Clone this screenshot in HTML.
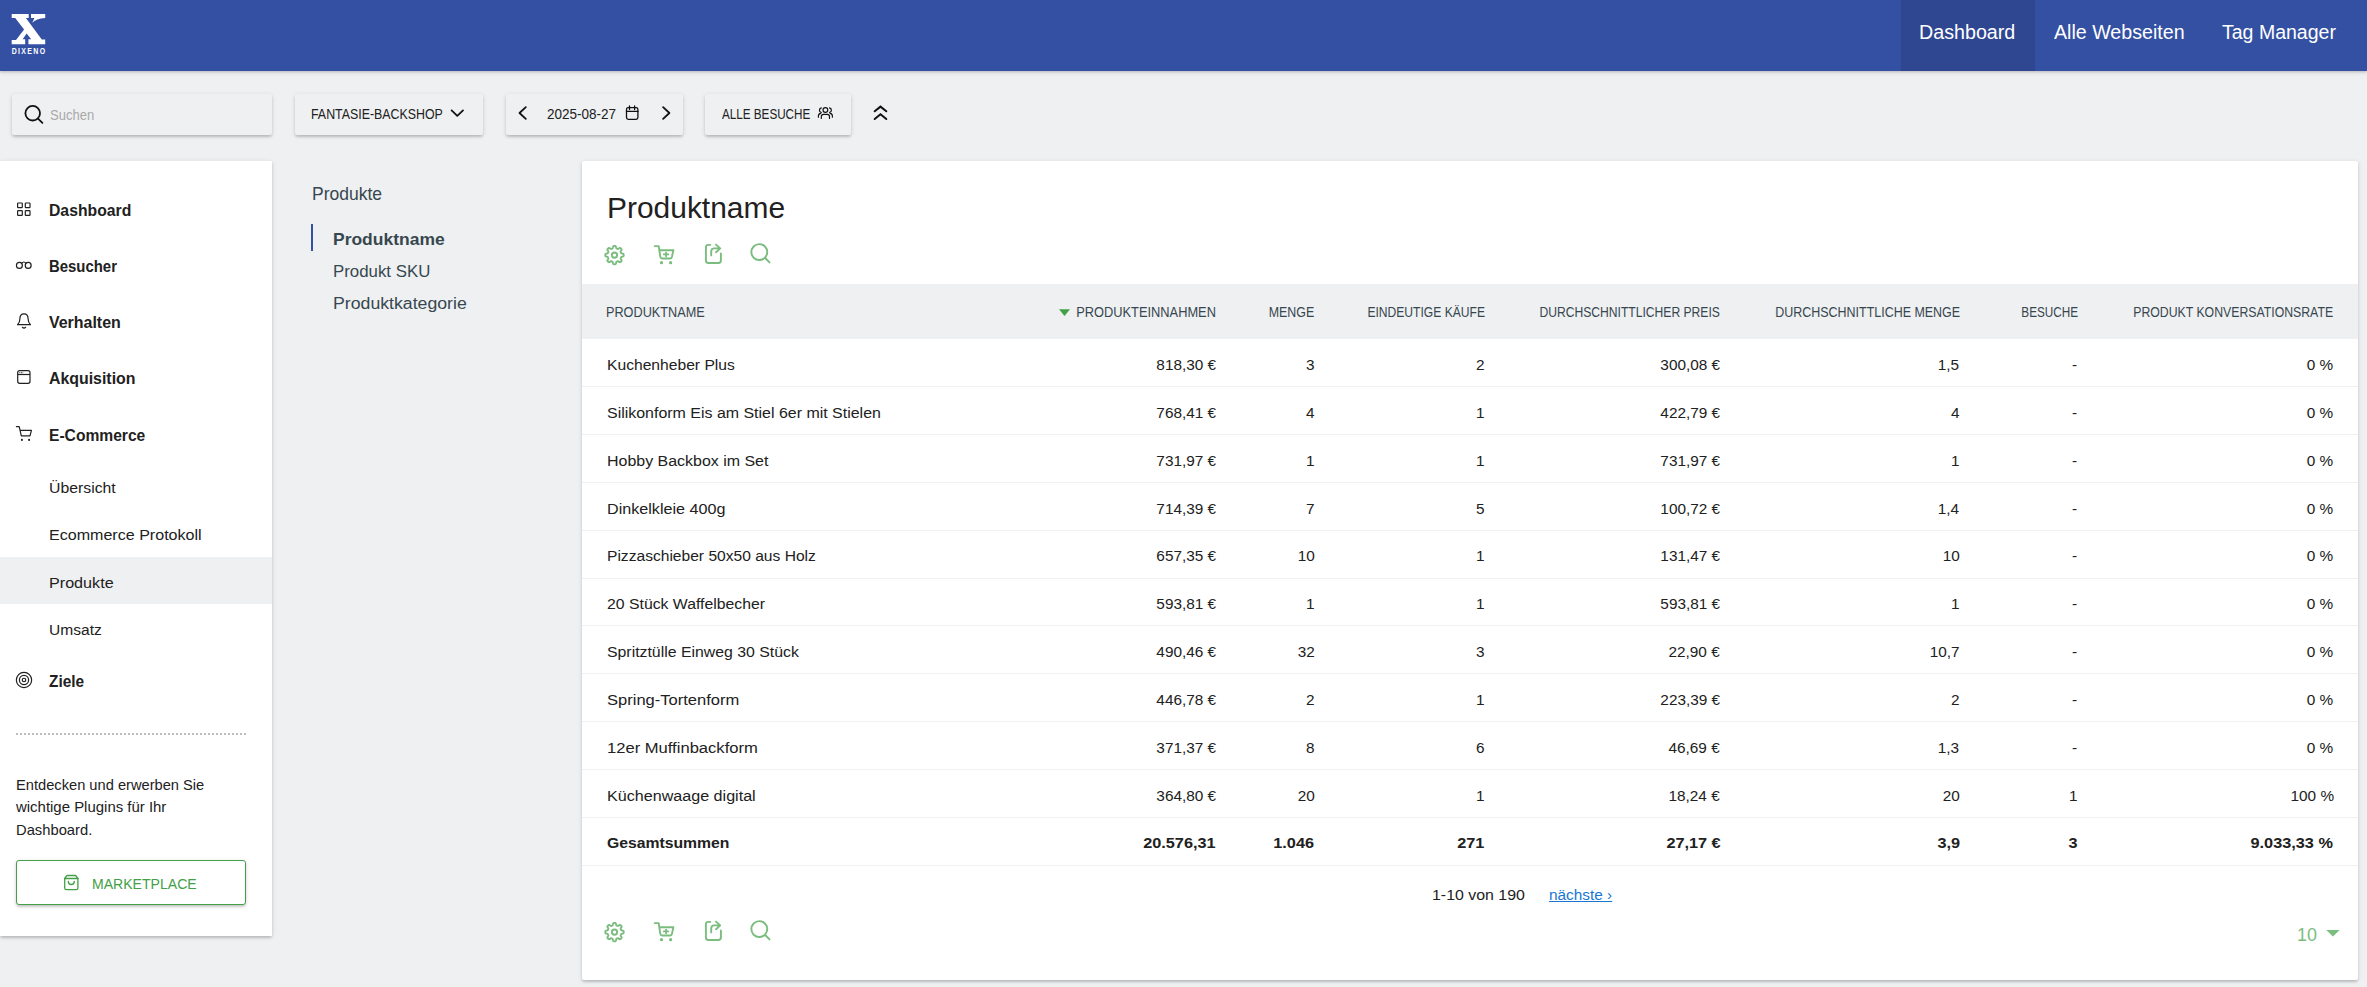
<!DOCTYPE html>
<html lang="de">
<head>
<meta charset="utf-8">
<title>Produkte - Dixeno Analytics</title>
<style>
*{box-sizing:border-box;margin:0;padding:0}
html,body{width:2367px;height:987px;overflow:hidden}
body{background:#eff0f2;font-family:"Liberation Sans",sans-serif;color:#212121;position:relative}
header,nav,aside,main,section,footer{display:contents}
.a{position:absolute}
.t{position:absolute;white-space:nowrap;display:block}
svg{position:absolute;overflow:visible}
.z1{box-shadow:0 2px 2.5px 0 rgba(0,0,0,.12),0 1px 5.5px 0 rgba(0,0,0,.11),0 3px 3px -2px rgba(0,0,0,.07)}
#hdr{left:0;top:0;width:2367px;height:71px;background:#3450a3;box-shadow:0 1px 2px rgba(0,0,0,.13),0 2px 4px rgba(0,0,0,.1)}
#act{left:1901px;top:0;width:134px;height:71px;background:#2f4691}
.box{top:94px;height:41px;background:#eff0f2;border-radius:2px}
#side{left:0;top:161px;width:272px;height:775px;background:#fff}
#hl{left:0;top:557px;width:272px;height:47px;background:#eff0f2}
#dots{left:16px;top:733px;width:230px;height:2px;background:repeating-linear-gradient(90deg,#bdbdbd 0,#bdbdbd 2px,transparent 2px,transparent 4px)}
#mkb{left:16px;top:860px;width:230px;height:45px;border:1px solid #43a047;border-radius:3px;background:#fff;box-shadow:0 2px 2.5px 0 rgba(0,0,0,.12),0 1px 5.5px 0 rgba(0,0,0,.11),0 3px 3px -2px rgba(0,0,0,.07)}
#bar{left:311px;top:224px;width:2px;height:27px;background:#3450a3}
#card{left:582px;top:161px;width:1776px;height:819px;background:#fff;border-radius:2px}
#thead{left:582px;top:284px;width:1776px;height:55px;background:#eff0f2}
.rb{position:absolute;left:582px;width:1776px;height:1px;background:#f1f1f1}
</style>
</head>
<body>

<header>
  <div class="a" id="hdr"></div>
  <div class="a" id="act"></div>
  <svg style="left:0;top:0" width="80" height="70" viewBox="0 0 80 70">
    <g fill="#fff">
      <path d="M11.7 14H28.7V18.1H25.9L41.8 39.4H45.2V44.3H28.4V39.2H31.2L26.6 33.6L22.7 39.2H25.2V44.3H11.7V40.1H16L24.1 29.4L15.2 18.1H11.7Z"/>
      <path d="M31 14H45.2V17.9C39 18.2 35 20.2 32.2 22.8C33.2 21 33.8 19.6 34.4 18.1H31Z"/>
    </g>
    <text transform="translate(11.7 54.3) scale(.84 1)" fill="#fff" font-family="Liberation Sans, sans-serif" font-weight="bold" font-size="8.3" textLength="39.8" lengthAdjust="spacing">DIXENO</text>
  </svg>
  <nav>
<span class="t" id="nav1" style="top:20.00px;font-size:19.5px;line-height:25px;color:#fff;left:1918.80px;transform-origin:0 50%;transform:scaleX(1.0095);">Dashboard</span>
<span class="t" id="nav2" style="top:20.00px;font-size:19.5px;line-height:25px;color:#fff;left:2054.21px;transform-origin:0 50%;transform:scaleX(1.0067);">Alle Webseiten</span>
<span class="t" id="nav3" style="top:20.00px;font-size:19.5px;line-height:25px;color:#fff;left:2221.87px;transform-origin:0 50%;transform:scaleX(1.0009);">Tag Manager</span>
  </nav>
</header>

<section id="toolbar">
  <div class="a box z1" style="left:12px;width:260px"></div>
  <svg style="left:20px;top:100px" width="26" height="26" viewBox="20 100 26 26" fill="none" stroke="#111" stroke-width="1.8" stroke-linecap="round"><circle cx="32.7" cy="113.2" r="7.3"/><path d="M38 118.6L42.4 122.8"/></svg>
<span class="t" id="tb1" style="top:106.00px;font-size:14.1px;line-height:18px;color:#a9a9a9;left:50.01px;transform-origin:0 50%;transform:scaleX(0.9238);">Suchen</span>
  <div class="a box z1" style="left:295px;width:188px"></div>
<span class="t" id="tb2" style="top:105.00px;font-size:14.5px;line-height:19px;color:#212121;left:311.02px;transform-origin:0 50%;transform:scaleX(0.8532);">FANTASIE-BACKSHOP</span>
  <svg style="left:449px;top:107px" width="17" height="12" viewBox="449 107 17 12" fill="none" stroke="#111" stroke-width="1.8" stroke-linecap="round" stroke-linejoin="round"><path d="M451.6 110.4L457.3 115.8L463 110.4"/></svg>
  <div class="a box z1" style="left:506px;width:177px"></div>
  <svg style="left:516px;top:104px" width="14" height="18" viewBox="516 104 14 18" fill="none" stroke="#111" stroke-width="1.8" stroke-linecap="round" stroke-linejoin="round"><path d="M525.8 107.1L519.5 113L525.8 118.9"/></svg>
<span class="t" id="tb3" style="top:105.00px;font-size:14.1px;line-height:18px;color:#212121;left:547.16px;transform-origin:0 50%;transform:scaleX(0.9587);">2025-08-27</span>
  <svg style="left:623px;top:104px" width="18" height="18" viewBox="623 104 18 18" fill="none" stroke="#111" stroke-width="1.3" stroke-linecap="round" stroke-linejoin="round"><rect x="626.5" y="107.6" width="11.4" height="11.8" rx="1.8"/><path d="M626.5 111.4H637.9M629.5 106V109.5M634.6 106V109.5"/></svg>
  <svg style="left:660px;top:104px" width="14" height="18" viewBox="660 104 14 18" fill="none" stroke="#111" stroke-width="1.8" stroke-linecap="round" stroke-linejoin="round"><path d="M663.1 107.1L669.4 113L663.1 118.9"/></svg>
  <div class="a box z1" style="left:705px;width:146px"></div>
<span class="t" id="tb4" style="top:105.00px;font-size:14.5px;line-height:19px;color:#212121;left:722.15px;transform-origin:0 50%;transform:scaleX(0.8053);">ALLE BESUCHE</span>
  <svg style="left:816px;top:105px" width="20" height="16" viewBox="816 105 20 16" fill="none" stroke="#111" stroke-width="1.15" stroke-linecap="round" stroke-linejoin="round"><circle cx="825.4" cy="110" r="2.4"/><path d="M821.3 118.4V116.6Q821.3 114.3 823.6 114.3H827.2Q829.5 114.3 829.5 116.6V118.4"/><path d="M821.3 107.9Q819.4 108.5 819.4 110.2T821.3 112.5M829.5 107.9Q831.4 108.5 831.4 110.2T829.5 112.5"/><path d="M818.4 117.2V116Q818.4 113.7 820.7 113.4M832.4 117.2V116Q832.4 113.7 830.1 113.4"/></svg>
  <svg style="left:872px;top:103px" width="18" height="20" viewBox="872 103 18 20" fill="none" stroke="#111" stroke-width="2" stroke-linecap="round" stroke-linejoin="miter"><path d="M874.7 111.3L880.5 106.6L886.3 111.3M874.7 119L880.5 114.2L886.3 119"/></svg>
</section>

<aside>
  <div class="a z1" id="side"></div>
  <div class="a" id="hl"></div>
  <nav>
<span class="t" id="m1" style="top:200.00px;font-size:16.3px;line-height:21px;color:#212121;font-weight:bold;left:48.93px;transform-origin:0 50%;transform:scaleX(0.9672);">Dashboard</span>
<span class="t" id="m2" style="top:256.00px;font-size:16.3px;line-height:21px;color:#212121;font-weight:bold;left:48.93px;transform-origin:0 50%;transform:scaleX(0.9158);">Besucher</span>
<span class="t" id="m3" style="top:312.00px;font-size:16.3px;line-height:21px;color:#212121;font-weight:bold;left:48.93px;transform-origin:0 50%;transform:scaleX(0.9794);">Verhalten</span>
<span class="t" id="m4" style="top:368.00px;font-size:16.3px;line-height:21px;color:#212121;font-weight:bold;left:48.93px;transform-origin:0 50%;transform:scaleX(0.9752);">Akquisition</span>
<span class="t" id="m5" style="top:425.00px;font-size:16.3px;line-height:21px;color:#212121;font-weight:bold;left:48.93px;transform-origin:0 50%;transform:scaleX(0.9585);">E-Commerce</span>
<span class="t" id="s1" style="top:478.00px;font-size:15.2px;line-height:20px;color:#212121;left:48.93px;transform-origin:0 50%;transform:scaleX(1.0405);">Übersicht</span>
<span class="t" id="s2" style="top:525.00px;font-size:15.2px;line-height:20px;color:#212121;left:48.93px;transform-origin:0 50%;transform:scaleX(1.0576);">Ecommerce Protokoll</span>
<span class="t" id="s3" style="top:573.00px;font-size:15.2px;line-height:20px;color:#212121;left:48.93px;transform-origin:0 50%;transform:scaleX(1.0628);">Produkte</span>
<span class="t" id="s4" style="top:620.00px;font-size:15.2px;line-height:20px;color:#212121;left:48.93px;transform-origin:0 50%;transform:scaleX(1.0247);">Umsatz</span>
<span class="t" id="m6" style="top:671.00px;font-size:16.3px;line-height:21px;color:#212121;font-weight:bold;left:48.93px;transform-origin:0 50%;transform:scaleX(0.9452);">Ziele</span>
  </nav>
  <svg style="left:15px;top:200px" width="20" height="20" viewBox="15 200 20 20" fill="none" stroke="#212121" stroke-width="1.2" stroke-linejoin="round"><rect x="17.6" y="203" width="4.7" height="4.7" rx=".6"/><rect x="25.3" y="203" width="4.7" height="4.7" rx=".6"/><rect x="17.6" y="210.7" width="4.7" height="4.7" rx=".6"/><rect x="25.3" y="210.7" width="4.7" height="4.7" rx=".6"/></svg>
  <svg style="left:14px;top:258px" width="20" height="14" viewBox="14 258 20 14" fill="none" stroke="#212121" stroke-width="1.2" stroke-linecap="round"><circle cx="19.4" cy="265.4" r="2.95"/><circle cx="28.2" cy="265.4" r="2.95"/><path d="M21.5 263.3Q23.8 260.7 26.1 263.3"/></svg>
  <svg style="left:15px;top:311px" width="20" height="20" viewBox="15 311 20 20" fill="none" stroke="#212121" stroke-width="1.2" stroke-linecap="round" stroke-linejoin="round"><path d="M17.5 324.7C19.6 323 19.9 321 19.9 318.8C19.9 315.7 21.6 313.9 24 313.9S28.1 315.7 28.1 318.8C28.1 321 28.4 323 30.5 324.7Z"/><path d="M22.4 327.3Q24 328.8 25.6 327.3"/></svg>
  <svg style="left:15px;top:368px" width="20" height="18" viewBox="15 368 20 18" fill="none" stroke="#212121" stroke-width="1.2" stroke-linejoin="round"><rect x="17.7" y="370.7" width="12.3" height="12.6" rx="2"/><path d="M17.7 374.5H30"/><path d="M19.4 372.7H23.2" stroke-width="1" stroke-dasharray=".9 .7"/></svg>
  <svg style="left:15px;top:424px" width="20" height="20" viewBox="15 424 20 20" fill="none" stroke="#212121" stroke-width="1.2" stroke-linecap="round" stroke-linejoin="round"><path d="M16.4 426.6H19.2L21.3 435.9H30L31.4 430.3H20.1"/><circle cx="21.9" cy="439.9" r="1.05" fill="#212121" stroke="none"/><circle cx="29.1" cy="439.9" r="1.05" fill="#212121" stroke="none"/></svg>
  <svg style="left:14px;top:670px" width="20" height="20" viewBox="14 670 20 20" fill="none" stroke="#212121" stroke-width="1.2"><circle cx="24" cy="680" r="7.65"/><circle cx="24" cy="680" r="4.6"/><circle cx="24" cy="680" r="1.75"/></svg>
  <div class="a" id="dots"></div>
<span class="t" id="p1" style="top:776.00px;font-size:14.1px;line-height:18px;color:#212121;left:16.22px;transform-origin:0 50%;transform:scaleX(1.0402);">Entdecken und erwerben Sie</span>
<span class="t" id="p2" style="top:798.00px;font-size:14.1px;line-height:18px;color:#212121;left:16.22px;transform-origin:0 50%;transform:scaleX(1.0604);">wichtige Plugins für Ihr</span>
<span class="t" id="p3" style="top:821.00px;font-size:14.1px;line-height:18px;color:#212121;left:16.22px;transform-origin:0 50%;transform:scaleX(1.0463);">Dashboard.</span>
  <div class="a" id="mkb"></div>
  <svg style="left:62px;top:873px" width="18" height="19" viewBox="62 873 18 19" fill="none" stroke="#43a047" stroke-width="1.3" stroke-linecap="round" stroke-linejoin="round"><path d="M64.7 878.5L67 875.5H75.6L77.9 878.5V888Q77.9 889.7 76.2 889.7H66.4Q64.7 889.7 64.7 888Z"/><path d="M64.7 878.5H77.9"/><path d="M68.3 881.3C68.3 885.6 74.3 885.6 74.3 881.3"/></svg>
<span class="t" id="mk" style="top:874.00px;font-size:15.4px;line-height:20px;color:#43a047;left:91.90px;transform-origin:0 50%;transform:scaleX(0.9134);">MARKETPLACE</span>
</aside>

<section id="subnav">
  <div class="a" id="bar"></div>
<span class="t" id="sn0" style="top:182.00px;font-size:18.4px;line-height:24px;color:#37474f;left:312.03px;transform-origin:0 50%;transform:scaleX(0.9518);">Produkte</span>
<span class="t" id="sn1" style="top:228.00px;font-size:17.3px;line-height:22px;color:#37474f;font-weight:bold;left:333.33px;transform-origin:0 50%;transform:scaleX(1.0109);">Produktname</span>
<span class="t" id="sn2" style="top:260.00px;font-size:17.3px;line-height:22px;color:#37474f;left:333.33px;transform-origin:0 50%;transform:scaleX(0.9740);">Produkt SKU</span>
<span class="t" id="sn3" style="top:292.00px;font-size:17.3px;line-height:22px;color:#37474f;left:333.33px;transform-origin:0 50%;transform:scaleX(1.0239);">Produktkategorie</span>
</section>

<main>
  <div class="a z1" id="card"></div>
<span class="t" id="h2" style="top:189.00px;font-size:29.2px;line-height:38px;color:#212121;left:606.57px;transform-origin:0 50%;transform:scaleX(1.0256);">Produktname</span>
  <svg style="left:600px;top:240px" width="176" height="28" viewBox="600 240 176 28"><g fill="none" stroke="#7bbd7e" stroke-width="1.9" stroke-linecap="round" stroke-linejoin="round"><path d="M623.70 255.10L623.69 255.34L623.67 255.58L623.64 255.82L623.56 256.05L623.42 256.27L623.14 256.47L622.68 256.62L622.11 256.72L621.65 256.82L621.36 256.94L621.20 257.09L621.10 257.24L621.02 257.41L620.94 257.57L620.87 257.74L620.81 257.91L620.74 258.08L620.68 258.25L620.64 258.44L620.65 258.65L620.77 258.94L621.03 259.34L621.35 259.81L621.58 260.24L621.63 260.57L621.58 260.83L621.47 261.05L621.33 261.25L621.17 261.43L621.01 261.61L620.83 261.77L620.65 261.93L620.45 262.07L620.23 262.18L619.97 262.23L619.64 262.18L619.21 261.95L618.74 261.63L618.34 261.37L618.05 261.25L617.84 261.24L617.65 261.28L617.48 261.34L617.31 261.41L617.14 261.47L616.97 261.54L616.81 261.62L616.64 261.70L616.49 261.80L616.34 261.96L616.22 262.25L616.12 262.71L616.02 263.28L615.87 263.74L615.67 264.02L615.45 264.16L615.22 264.24L614.98 264.27L614.74 264.29L614.50 264.30L614.26 264.29L614.02 264.27L613.78 264.24L613.55 264.16L613.33 264.02L613.13 263.74L612.98 263.28L612.88 262.71L612.78 262.25L612.66 261.96L612.51 261.80L612.36 261.70L612.19 261.62L612.03 261.54L611.86 261.47L611.69 261.41L611.52 261.34L611.35 261.28L611.16 261.24L610.95 261.25L610.66 261.37L610.26 261.63L609.79 261.95L609.36 262.18L609.03 262.23L608.77 262.18L608.55 262.07L608.35 261.93L608.17 261.77L607.99 261.61L607.83 261.43L607.67 261.25L607.53 261.05L607.42 260.83L607.37 260.57L607.42 260.24L607.65 259.81L607.97 259.34L608.23 258.94L608.35 258.65L608.36 258.44L608.32 258.25L608.26 258.08L608.19 257.91L608.13 257.74L608.06 257.57L607.98 257.41L607.90 257.24L607.80 257.09L607.64 256.94L607.35 256.82L606.89 256.72L606.32 256.62L605.86 256.47L605.58 256.27L605.44 256.05L605.36 255.82L605.33 255.58L605.31 255.34L605.30 255.10L605.31 254.86L605.33 254.62L605.36 254.38L605.44 254.15L605.58 253.93L605.86 253.73L606.32 253.58L606.89 253.48L607.35 253.38L607.64 253.26L607.80 253.11L607.90 252.96L607.98 252.79L608.06 252.63L608.13 252.46L608.19 252.29L608.26 252.12L608.32 251.95L608.36 251.76L608.35 251.55L608.23 251.26L607.97 250.86L607.65 250.39L607.42 249.96L607.37 249.63L607.42 249.37L607.53 249.15L607.67 248.95L607.83 248.77L607.99 248.59L608.17 248.43L608.35 248.27L608.55 248.13L608.77 248.02L609.03 247.97L609.36 248.02L609.79 248.25L610.26 248.57L610.66 248.83L610.95 248.95L611.16 248.96L611.35 248.92L611.52 248.86L611.69 248.79L611.86 248.73L612.03 248.66L612.19 248.58L612.36 248.50L612.51 248.40L612.66 248.24L612.78 247.95L612.88 247.49L612.98 246.92L613.13 246.46L613.33 246.18L613.55 246.04L613.78 245.96L614.02 245.93L614.26 245.91L614.50 245.90L614.74 245.91L614.98 245.93L615.22 245.96L615.45 246.04L615.67 246.18L615.87 246.46L616.02 246.92L616.12 247.49L616.22 247.95L616.34 248.24L616.49 248.40L616.64 248.50L616.81 248.58L616.97 248.66L617.14 248.73L617.31 248.79L617.48 248.86L617.65 248.92L617.84 248.96L618.05 248.95L618.34 248.83L618.74 248.57L619.21 248.25L619.64 248.02L619.97 247.97L620.23 248.02L620.45 248.13L620.65 248.27L620.83 248.43L621.01 248.59L621.17 248.77L621.33 248.95L621.47 249.15L621.58 249.37L621.63 249.63L621.58 249.96L621.35 250.39L621.03 250.86L620.77 251.26L620.65 251.55L620.64 251.76L620.68 251.95L620.74 252.12L620.81 252.29L620.87 252.46L620.94 252.63L621.02 252.79L621.10 252.96L621.20 253.11L621.36 253.26L621.65 253.38L622.11 253.48L622.68 253.58L623.14 253.73L623.42 253.93L623.56 254.15L623.64 254.38L623.67 254.62L623.69 254.86Z"/><circle cx="614.5" cy="255.1" r="2.65"/><path d="M654.7 246.1H658.7L660.3 256.8Q660.6 258.5 662.2 258.5H669.9Q671.5 258.5 671.9 256.9L673.4 250.2H659.5"/><path d="M666.1 252.7V256.2M663.9 254.4H668.3"/><circle cx="661.5" cy="262.7" r="1.6" fill="#7bbd7e" stroke="none"/><circle cx="670.6" cy="262.7" r="1.6" fill="#7bbd7e" stroke="none"/><path d="M710.3 244.9H708.3Q705.9 244.9 705.9 247.3V260.6Q705.9 263.0 708.3 263.0H718.5Q720.9 263.0 720.9 260.6V253.5"/><path d="M711.2 255.4V251.4Q711.2 248.4 714.2 248.4H719.8M716 244.6L720.2 248.4L716 252.2"/><circle cx="759.3" cy="252.1" r="7.95"/><path d="M765.2 258.0L769.5 262.4"/></g></svg>
  <div class="a" id="thead"></div>
  <svg style="left:1058px;top:308px" width="14" height="10" viewBox="1058 308 14 10"><path d="M1059 309.2H1070L1064.5 316Z" fill="#43a047"/></svg>
<span class="t" id="th0" style="top:303.00px;font-size:14.5px;line-height:19px;color:#37474f;left:606.00px;transform-origin:0 50%;transform:scaleX(0.8748);">PRODUKTNAME</span>
<span class="t" id="th1" style="top:303.00px;font-size:14.5px;line-height:19px;color:#37474f;right:1150.90px;transform-origin:100% 50%;transform:scaleX(0.8846);">PRODUKTEINNAHMEN</span>
<span class="t" id="th2" style="top:303.00px;font-size:14.5px;line-height:19px;color:#37474f;right:1053.05px;transform-origin:100% 50%;transform:scaleX(0.8561);">MENGE</span>
<span class="t" id="th3" style="top:303.00px;font-size:14.5px;line-height:19px;color:#37474f;right:882.15px;transform-origin:100% 50%;transform:scaleX(0.8341);">EINDEUTIGE KÄUFE</span>
<span class="t" id="th4" style="top:303.00px;font-size:14.5px;line-height:19px;color:#37474f;right:647.31px;transform-origin:100% 50%;transform:scaleX(0.8359);">DURCHSCHNITTLICHER PREIS</span>
<span class="t" id="th5" style="top:303.00px;font-size:14.5px;line-height:19px;color:#37474f;right:407.32px;transform-origin:100% 50%;transform:scaleX(0.8591);">DURCHSCHNITTLICHE MENGE</span>
<span class="t" id="th6" style="top:303.00px;font-size:14.5px;line-height:19px;color:#37474f;right:288.42px;transform-origin:100% 50%;transform:scaleX(0.8100);">BESUCHE</span>
<span class="t" id="th7" style="top:303.00px;font-size:14.5px;line-height:19px;color:#37474f;right:33.86px;transform-origin:100% 50%;transform:scaleX(0.8466);">PRODUKT KONVERSATIONSRATE</span>
<div class="rb" style="top:386px"></div><div class="rb" style="top:434px"></div><div class="rb" style="top:482px"></div><div class="rb" style="top:530px"></div><div class="rb" style="top:578px"></div><div class="rb" style="top:625px"></div><div class="rb" style="top:673px"></div><div class="rb" style="top:721px"></div><div class="rb" style="top:769px"></div><div class="rb" style="top:817px"></div><div class="rb" style="top:865px"></div>
<span class="t" id="r0n" style="top:355.00px;font-size:15.2px;line-height:20px;color:#212121;left:606.63px;transform-origin:0 50%;transform:scaleX(1.0301);">Kuchenheber Plus</span>
<span class="t" id="r0c0" style="top:355.00px;font-size:15.2px;line-height:20px;color:#212121;right:1150.69px;transform-origin:100% 50%;transform:scaleX(1.0109);">818,30 €</span>
<span class="t" id="r0c1" style="top:355.00px;font-size:15.2px;line-height:20px;color:#212121;right:1052.48px;transform-origin:100% 50%;transform:scaleX(1.0109);">3</span>
<span class="t" id="r0c2" style="top:355.00px;font-size:15.2px;line-height:20px;color:#212121;right:882.49px;transform-origin:100% 50%;transform:scaleX(1.0109);">2</span>
<span class="t" id="r0c3" style="top:355.00px;font-size:15.2px;line-height:20px;color:#212121;right:647.29px;transform-origin:100% 50%;transform:scaleX(1.0109);">300,08 €</span>
<span class="t" id="r0c4" style="top:355.00px;font-size:15.2px;line-height:20px;color:#212121;right:407.43px;transform-origin:100% 50%;transform:scaleX(1.0109);">1,5</span>
<span class="t" id="r0c5" style="top:355.00px;font-size:15.2px;line-height:20px;color:#212121;right:289.93px;transform-origin:100% 50%;transform:scaleX(1.0109);">-</span>
<span class="t" id="r0c6" style="top:355.00px;font-size:15.2px;line-height:20px;color:#212121;right:33.36px;transform-origin:100% 50%;transform:scaleX(1.0109);">0 %</span>
<span class="t" id="r1n" style="top:403.00px;font-size:15.2px;line-height:20px;color:#212121;left:606.63px;transform-origin:0 50%;transform:scaleX(1.0501);">Silikonform Eis am Stiel 6er mit Stielen</span>
<span class="t" id="r1c0" style="top:403.00px;font-size:15.2px;line-height:20px;color:#212121;right:1150.69px;transform-origin:100% 50%;transform:scaleX(1.0109);">768,41 €</span>
<span class="t" id="r1c1" style="top:403.00px;font-size:15.2px;line-height:20px;color:#212121;right:1052.48px;transform-origin:100% 50%;transform:scaleX(1.0109);">4</span>
<span class="t" id="r1c2" style="top:403.00px;font-size:15.2px;line-height:20px;color:#212121;right:882.49px;transform-origin:100% 50%;transform:scaleX(1.0109);">1</span>
<span class="t" id="r1c3" style="top:403.00px;font-size:15.2px;line-height:20px;color:#212121;right:647.29px;transform-origin:100% 50%;transform:scaleX(1.0109);">422,79 €</span>
<span class="t" id="r1c4" style="top:403.00px;font-size:15.2px;line-height:20px;color:#212121;right:407.43px;transform-origin:100% 50%;transform:scaleX(1.0109);">4</span>
<span class="t" id="r1c5" style="top:403.00px;font-size:15.2px;line-height:20px;color:#212121;right:289.93px;transform-origin:100% 50%;transform:scaleX(1.0109);">-</span>
<span class="t" id="r1c6" style="top:403.00px;font-size:15.2px;line-height:20px;color:#212121;right:33.36px;transform-origin:100% 50%;transform:scaleX(1.0109);">0 %</span>
<span class="t" id="r2n" style="top:451.00px;font-size:15.2px;line-height:20px;color:#212121;left:606.63px;transform-origin:0 50%;transform:scaleX(1.0503);">Hobby Backbox im Set</span>
<span class="t" id="r2c0" style="top:451.00px;font-size:15.2px;line-height:20px;color:#212121;right:1150.69px;transform-origin:100% 50%;transform:scaleX(1.0109);">731,97 €</span>
<span class="t" id="r2c1" style="top:451.00px;font-size:15.2px;line-height:20px;color:#212121;right:1052.48px;transform-origin:100% 50%;transform:scaleX(1.0109);">1</span>
<span class="t" id="r2c2" style="top:451.00px;font-size:15.2px;line-height:20px;color:#212121;right:882.49px;transform-origin:100% 50%;transform:scaleX(1.0109);">1</span>
<span class="t" id="r2c3" style="top:451.00px;font-size:15.2px;line-height:20px;color:#212121;right:647.29px;transform-origin:100% 50%;transform:scaleX(1.0109);">731,97 €</span>
<span class="t" id="r2c4" style="top:451.00px;font-size:15.2px;line-height:20px;color:#212121;right:407.43px;transform-origin:100% 50%;transform:scaleX(1.0109);">1</span>
<span class="t" id="r2c5" style="top:451.00px;font-size:15.2px;line-height:20px;color:#212121;right:289.93px;transform-origin:100% 50%;transform:scaleX(1.0109);">-</span>
<span class="t" id="r2c6" style="top:451.00px;font-size:15.2px;line-height:20px;color:#212121;right:33.36px;transform-origin:100% 50%;transform:scaleX(1.0109);">0 %</span>
<span class="t" id="r3n" style="top:499.00px;font-size:15.2px;line-height:20px;color:#212121;left:606.63px;transform-origin:0 50%;transform:scaleX(1.0624);">Dinkelkleie 400g</span>
<span class="t" id="r3c0" style="top:499.00px;font-size:15.2px;line-height:20px;color:#212121;right:1150.69px;transform-origin:100% 50%;transform:scaleX(1.0109);">714,39 €</span>
<span class="t" id="r3c1" style="top:499.00px;font-size:15.2px;line-height:20px;color:#212121;right:1052.48px;transform-origin:100% 50%;transform:scaleX(1.0109);">7</span>
<span class="t" id="r3c2" style="top:499.00px;font-size:15.2px;line-height:20px;color:#212121;right:882.49px;transform-origin:100% 50%;transform:scaleX(1.0109);">5</span>
<span class="t" id="r3c3" style="top:499.00px;font-size:15.2px;line-height:20px;color:#212121;right:647.29px;transform-origin:100% 50%;transform:scaleX(1.0109);">100,72 €</span>
<span class="t" id="r3c4" style="top:499.00px;font-size:15.2px;line-height:20px;color:#212121;right:407.43px;transform-origin:100% 50%;transform:scaleX(1.0109);">1,4</span>
<span class="t" id="r3c5" style="top:499.00px;font-size:15.2px;line-height:20px;color:#212121;right:289.93px;transform-origin:100% 50%;transform:scaleX(1.0109);">-</span>
<span class="t" id="r3c6" style="top:499.00px;font-size:15.2px;line-height:20px;color:#212121;right:33.36px;transform-origin:100% 50%;transform:scaleX(1.0109);">0 %</span>
<span class="t" id="r4n" style="top:546.00px;font-size:15.2px;line-height:20px;color:#212121;left:606.63px;transform-origin:0 50%;transform:scaleX(1.0266);">Pizzaschieber 50x50 aus Holz</span>
<span class="t" id="r4c0" style="top:546.00px;font-size:15.2px;line-height:20px;color:#212121;right:1150.69px;transform-origin:100% 50%;transform:scaleX(1.0109);">657,35 €</span>
<span class="t" id="r4c1" style="top:546.00px;font-size:15.2px;line-height:20px;color:#212121;right:1052.48px;transform-origin:100% 50%;transform:scaleX(1.0109);">10</span>
<span class="t" id="r4c2" style="top:546.00px;font-size:15.2px;line-height:20px;color:#212121;right:882.49px;transform-origin:100% 50%;transform:scaleX(1.0109);">1</span>
<span class="t" id="r4c3" style="top:546.00px;font-size:15.2px;line-height:20px;color:#212121;right:647.29px;transform-origin:100% 50%;transform:scaleX(1.0109);">131,47 €</span>
<span class="t" id="r4c4" style="top:546.00px;font-size:15.2px;line-height:20px;color:#212121;right:407.43px;transform-origin:100% 50%;transform:scaleX(1.0109);">10</span>
<span class="t" id="r4c5" style="top:546.00px;font-size:15.2px;line-height:20px;color:#212121;right:289.93px;transform-origin:100% 50%;transform:scaleX(1.0109);">-</span>
<span class="t" id="r4c6" style="top:546.00px;font-size:15.2px;line-height:20px;color:#212121;right:33.36px;transform-origin:100% 50%;transform:scaleX(1.0109);">0 %</span>
<span class="t" id="r5n" style="top:594.00px;font-size:15.2px;line-height:20px;color:#212121;left:606.63px;transform-origin:0 50%;transform:scaleX(1.0404);">20 Stück Waffelbecher</span>
<span class="t" id="r5c0" style="top:594.00px;font-size:15.2px;line-height:20px;color:#212121;right:1150.69px;transform-origin:100% 50%;transform:scaleX(1.0109);">593,81 €</span>
<span class="t" id="r5c1" style="top:594.00px;font-size:15.2px;line-height:20px;color:#212121;right:1052.48px;transform-origin:100% 50%;transform:scaleX(1.0109);">1</span>
<span class="t" id="r5c2" style="top:594.00px;font-size:15.2px;line-height:20px;color:#212121;right:882.49px;transform-origin:100% 50%;transform:scaleX(1.0109);">1</span>
<span class="t" id="r5c3" style="top:594.00px;font-size:15.2px;line-height:20px;color:#212121;right:647.29px;transform-origin:100% 50%;transform:scaleX(1.0109);">593,81 €</span>
<span class="t" id="r5c4" style="top:594.00px;font-size:15.2px;line-height:20px;color:#212121;right:407.43px;transform-origin:100% 50%;transform:scaleX(1.0109);">1</span>
<span class="t" id="r5c5" style="top:594.00px;font-size:15.2px;line-height:20px;color:#212121;right:289.93px;transform-origin:100% 50%;transform:scaleX(1.0109);">-</span>
<span class="t" id="r5c6" style="top:594.00px;font-size:15.2px;line-height:20px;color:#212121;right:33.36px;transform-origin:100% 50%;transform:scaleX(1.0109);">0 %</span>
<span class="t" id="r6n" style="top:642.00px;font-size:15.2px;line-height:20px;color:#212121;left:606.63px;transform-origin:0 50%;transform:scaleX(1.0425);">Spritztülle Einweg 30 Stück</span>
<span class="t" id="r6c0" style="top:642.00px;font-size:15.2px;line-height:20px;color:#212121;right:1150.69px;transform-origin:100% 50%;transform:scaleX(1.0109);">490,46 €</span>
<span class="t" id="r6c1" style="top:642.00px;font-size:15.2px;line-height:20px;color:#212121;right:1052.48px;transform-origin:100% 50%;transform:scaleX(1.0109);">32</span>
<span class="t" id="r6c2" style="top:642.00px;font-size:15.2px;line-height:20px;color:#212121;right:882.49px;transform-origin:100% 50%;transform:scaleX(1.0109);">3</span>
<span class="t" id="r6c3" style="top:642.00px;font-size:15.2px;line-height:20px;color:#212121;right:647.29px;transform-origin:100% 50%;transform:scaleX(1.0109);">22,90 €</span>
<span class="t" id="r6c4" style="top:642.00px;font-size:15.2px;line-height:20px;color:#212121;right:407.43px;transform-origin:100% 50%;transform:scaleX(1.0109);">10,7</span>
<span class="t" id="r6c5" style="top:642.00px;font-size:15.2px;line-height:20px;color:#212121;right:289.93px;transform-origin:100% 50%;transform:scaleX(1.0109);">-</span>
<span class="t" id="r6c6" style="top:642.00px;font-size:15.2px;line-height:20px;color:#212121;right:33.36px;transform-origin:100% 50%;transform:scaleX(1.0109);">0 %</span>
<span class="t" id="r7n" style="top:690.00px;font-size:15.2px;line-height:20px;color:#212121;left:606.63px;transform-origin:0 50%;transform:scaleX(1.0886);">Spring-Tortenform</span>
<span class="t" id="r7c0" style="top:690.00px;font-size:15.2px;line-height:20px;color:#212121;right:1150.69px;transform-origin:100% 50%;transform:scaleX(1.0109);">446,78 €</span>
<span class="t" id="r7c1" style="top:690.00px;font-size:15.2px;line-height:20px;color:#212121;right:1052.48px;transform-origin:100% 50%;transform:scaleX(1.0109);">2</span>
<span class="t" id="r7c2" style="top:690.00px;font-size:15.2px;line-height:20px;color:#212121;right:882.49px;transform-origin:100% 50%;transform:scaleX(1.0109);">1</span>
<span class="t" id="r7c3" style="top:690.00px;font-size:15.2px;line-height:20px;color:#212121;right:647.29px;transform-origin:100% 50%;transform:scaleX(1.0109);">223,39 €</span>
<span class="t" id="r7c4" style="top:690.00px;font-size:15.2px;line-height:20px;color:#212121;right:407.43px;transform-origin:100% 50%;transform:scaleX(1.0109);">2</span>
<span class="t" id="r7c5" style="top:690.00px;font-size:15.2px;line-height:20px;color:#212121;right:289.93px;transform-origin:100% 50%;transform:scaleX(1.0109);">-</span>
<span class="t" id="r7c6" style="top:690.00px;font-size:15.2px;line-height:20px;color:#212121;right:33.36px;transform-origin:100% 50%;transform:scaleX(1.0109);">0 %</span>
<span class="t" id="r8n" style="top:738.00px;font-size:15.2px;line-height:20px;color:#212121;left:606.63px;transform-origin:0 50%;transform:scaleX(1.0915);">12er Muffinbackform</span>
<span class="t" id="r8c0" style="top:738.00px;font-size:15.2px;line-height:20px;color:#212121;right:1150.69px;transform-origin:100% 50%;transform:scaleX(1.0109);">371,37 €</span>
<span class="t" id="r8c1" style="top:738.00px;font-size:15.2px;line-height:20px;color:#212121;right:1052.48px;transform-origin:100% 50%;transform:scaleX(1.0109);">8</span>
<span class="t" id="r8c2" style="top:738.00px;font-size:15.2px;line-height:20px;color:#212121;right:882.49px;transform-origin:100% 50%;transform:scaleX(1.0109);">6</span>
<span class="t" id="r8c3" style="top:738.00px;font-size:15.2px;line-height:20px;color:#212121;right:647.29px;transform-origin:100% 50%;transform:scaleX(1.0109);">46,69 €</span>
<span class="t" id="r8c4" style="top:738.00px;font-size:15.2px;line-height:20px;color:#212121;right:407.43px;transform-origin:100% 50%;transform:scaleX(1.0109);">1,3</span>
<span class="t" id="r8c5" style="top:738.00px;font-size:15.2px;line-height:20px;color:#212121;right:289.93px;transform-origin:100% 50%;transform:scaleX(1.0109);">-</span>
<span class="t" id="r8c6" style="top:738.00px;font-size:15.2px;line-height:20px;color:#212121;right:33.36px;transform-origin:100% 50%;transform:scaleX(1.0109);">0 %</span>
<span class="t" id="r9n" style="top:786.00px;font-size:15.2px;line-height:20px;color:#212121;left:606.63px;transform-origin:0 50%;transform:scaleX(1.0608);">Küchenwaage digital</span>
<span class="t" id="r9c0" style="top:786.00px;font-size:15.2px;line-height:20px;color:#212121;right:1150.69px;transform-origin:100% 50%;transform:scaleX(1.0109);">364,80 €</span>
<span class="t" id="r9c1" style="top:786.00px;font-size:15.2px;line-height:20px;color:#212121;right:1052.48px;transform-origin:100% 50%;transform:scaleX(1.0109);">20</span>
<span class="t" id="r9c2" style="top:786.00px;font-size:15.2px;line-height:20px;color:#212121;right:882.49px;transform-origin:100% 50%;transform:scaleX(1.0109);">1</span>
<span class="t" id="r9c3" style="top:786.00px;font-size:15.2px;line-height:20px;color:#212121;right:647.29px;transform-origin:100% 50%;transform:scaleX(1.0109);">18,24 €</span>
<span class="t" id="r9c4" style="top:786.00px;font-size:15.2px;line-height:20px;color:#212121;right:407.43px;transform-origin:100% 50%;transform:scaleX(1.0109);">20</span>
<span class="t" id="r9c5" style="top:786.00px;font-size:15.2px;line-height:20px;color:#212121;right:289.93px;transform-origin:100% 50%;transform:scaleX(1.0109);">1</span>
<span class="t" id="r9c6" style="top:786.00px;font-size:15.2px;line-height:20px;color:#212121;right:33.36px;transform-origin:100% 50%;transform:scaleX(1.0109);">100 %</span>
<span class="t" id="r10n" style="top:833.00px;font-size:15.2px;line-height:20px;color:#212121;font-weight:bold;left:606.63px;transform-origin:0 50%;transform:scaleX(1.0359);">Gesamtsummen</span>
<span class="t" id="r10c0" style="top:833.00px;font-size:15.2px;line-height:20px;color:#212121;font-weight:bold;right:1151.57px;transform-origin:100% 50%;transform:scaleX(1.0713);">20.576,31</span>
<span class="t" id="r10c1" style="top:833.00px;font-size:15.2px;line-height:20px;color:#212121;font-weight:bold;right:1052.80px;transform-origin:100% 50%;transform:scaleX(1.0713);">1.046</span>
<span class="t" id="r10c2" style="top:833.00px;font-size:15.2px;line-height:20px;color:#212121;font-weight:bold;right:882.78px;transform-origin:100% 50%;transform:scaleX(1.0713);">271</span>
<span class="t" id="r10c3" style="top:833.00px;font-size:15.2px;line-height:20px;color:#212121;font-weight:bold;right:646.03px;transform-origin:100% 50%;transform:scaleX(1.0713);">27,17 €</span>
<span class="t" id="r10c4" style="top:833.00px;font-size:15.2px;line-height:20px;color:#212121;font-weight:bold;right:407.20px;transform-origin:100% 50%;transform:scaleX(1.0713);">3,9</span>
<span class="t" id="r10c5" style="top:833.00px;font-size:15.2px;line-height:20px;color:#212121;font-weight:bold;right:289.37px;transform-origin:100% 50%;transform:scaleX(1.0713);">3</span>
<span class="t" id="r10c6" style="top:833.00px;font-size:15.2px;line-height:20px;color:#212121;font-weight:bold;right:34.23px;transform-origin:100% 50%;transform:scaleX(1.0713);">9.033,33 %</span>
  <footer>
<span class="t" id="pg1" style="top:885.00px;font-size:15.2px;line-height:20px;color:#212121;left:1432.20px;transform-origin:0 50%;transform:scaleX(1.0475);">1-10 von 190</span>
<span class="t" id="pg2" style="top:885.00px;font-size:15.2px;line-height:20px;color:#1976d2;left:1549.20px;transform-origin:0 50%;transform:scaleX(1.0115);text-decoration:underline">nächste ›</span>
  <svg style="left:600px;top:917px" width="176" height="28" viewBox="600 917 176 28"><g fill="none" stroke="#7bbd7e" stroke-width="1.9" stroke-linecap="round" stroke-linejoin="round"><path d="M623.70 932.10L623.69 932.34L623.67 932.58L623.64 932.82L623.56 933.05L623.42 933.27L623.14 933.47L622.68 933.62L622.11 933.72L621.65 933.82L621.36 933.94L621.20 934.09L621.10 934.24L621.02 934.41L620.94 934.57L620.87 934.74L620.81 934.91L620.74 935.08L620.68 935.25L620.64 935.44L620.65 935.65L620.77 935.94L621.03 936.34L621.35 936.81L621.58 937.24L621.63 937.57L621.58 937.83L621.47 938.05L621.33 938.25L621.17 938.43L621.01 938.61L620.83 938.77L620.65 938.93L620.45 939.07L620.23 939.18L619.97 939.23L619.64 939.18L619.21 938.95L618.74 938.63L618.34 938.37L618.05 938.25L617.84 938.24L617.65 938.28L617.48 938.34L617.31 938.41L617.14 938.47L616.97 938.54L616.81 938.62L616.64 938.70L616.49 938.80L616.34 938.96L616.22 939.25L616.12 939.71L616.02 940.28L615.87 940.74L615.67 941.02L615.45 941.16L615.22 941.24L614.98 941.27L614.74 941.29L614.50 941.30L614.26 941.29L614.02 941.27L613.78 941.24L613.55 941.16L613.33 941.02L613.13 940.74L612.98 940.28L612.88 939.71L612.78 939.25L612.66 938.96L612.51 938.80L612.36 938.70L612.19 938.62L612.03 938.54L611.86 938.47L611.69 938.41L611.52 938.34L611.35 938.28L611.16 938.24L610.95 938.25L610.66 938.37L610.26 938.63L609.79 938.95L609.36 939.18L609.03 939.23L608.77 939.18L608.55 939.07L608.35 938.93L608.17 938.77L607.99 938.61L607.83 938.43L607.67 938.25L607.53 938.05L607.42 937.83L607.37 937.57L607.42 937.24L607.65 936.81L607.97 936.34L608.23 935.94L608.35 935.65L608.36 935.44L608.32 935.25L608.26 935.08L608.19 934.91L608.13 934.74L608.06 934.57L607.98 934.41L607.90 934.24L607.80 934.09L607.64 933.94L607.35 933.82L606.89 933.72L606.32 933.62L605.86 933.47L605.58 933.27L605.44 933.05L605.36 932.82L605.33 932.58L605.31 932.34L605.30 932.10L605.31 931.86L605.33 931.62L605.36 931.38L605.44 931.15L605.58 930.93L605.86 930.73L606.32 930.58L606.89 930.48L607.35 930.38L607.64 930.26L607.80 930.11L607.90 929.96L607.98 929.79L608.06 929.63L608.13 929.46L608.19 929.29L608.26 929.12L608.32 928.95L608.36 928.76L608.35 928.55L608.23 928.26L607.97 927.86L607.65 927.39L607.42 926.96L607.37 926.63L607.42 926.37L607.53 926.15L607.67 925.95L607.83 925.77L607.99 925.59L608.17 925.43L608.35 925.27L608.55 925.13L608.77 925.02L609.03 924.97L609.36 925.02L609.79 925.25L610.26 925.57L610.66 925.83L610.95 925.95L611.16 925.96L611.35 925.92L611.52 925.86L611.69 925.79L611.86 925.73L612.03 925.66L612.19 925.58L612.36 925.50L612.51 925.40L612.66 925.24L612.78 924.95L612.88 924.49L612.98 923.92L613.13 923.46L613.33 923.18L613.55 923.04L613.78 922.96L614.02 922.93L614.26 922.91L614.50 922.90L614.74 922.91L614.98 922.93L615.22 922.96L615.45 923.04L615.67 923.18L615.87 923.46L616.02 923.92L616.12 924.49L616.22 924.95L616.34 925.24L616.49 925.40L616.64 925.50L616.81 925.58L616.97 925.66L617.14 925.73L617.31 925.79L617.48 925.86L617.65 925.92L617.84 925.96L618.05 925.95L618.34 925.83L618.74 925.57L619.21 925.25L619.64 925.02L619.97 924.97L620.23 925.02L620.45 925.13L620.65 925.27L620.83 925.43L621.01 925.59L621.17 925.77L621.33 925.95L621.47 926.15L621.58 926.37L621.63 926.63L621.58 926.96L621.35 927.39L621.03 927.86L620.77 928.26L620.65 928.55L620.64 928.76L620.68 928.95L620.74 929.12L620.81 929.29L620.87 929.46L620.94 929.63L621.02 929.79L621.10 929.96L621.20 930.11L621.36 930.26L621.65 930.38L622.11 930.48L622.68 930.58L623.14 930.73L623.42 930.93L623.56 931.15L623.64 931.38L623.67 931.62L623.69 931.86Z"/><circle cx="614.5" cy="932.1" r="2.65"/><path d="M654.7 923.1H658.7L660.3 933.8Q660.6 935.5 662.2 935.5H669.9Q671.5 935.5 671.9 933.9L673.4 927.2H659.5"/><path d="M666.1 929.7V933.2M663.9 931.4H668.3"/><circle cx="661.5" cy="939.7" r="1.6" fill="#7bbd7e" stroke="none"/><circle cx="670.6" cy="939.7" r="1.6" fill="#7bbd7e" stroke="none"/><path d="M710.3 921.9H708.3Q705.9 921.9 705.9 924.3V937.6Q705.9 940.0 708.3 940.0H718.5Q720.9 940.0 720.9 937.6V930.5"/><path d="M711.2 932.4V928.4Q711.2 925.4 714.2 925.4H719.8M716 921.6L720.2 925.4L716 929.2"/><circle cx="759.3" cy="929.1" r="7.95"/><path d="M765.2 935.0L769.5 939.4"/></g></svg>
<span class="t" id="lim" style="top:922.00px;font-size:19.2px;line-height:25px;color:#7bbd7e;left:2296.96px;transform-origin:0 50%;transform:scaleX(0.9343);">10</span>
  <svg style="left:2325px;top:929px" width="16" height="9" viewBox="2325 929 16 9"><path d="M2326.3 930H2339.6L2333 936.6Z" fill="#7bbd7e"/></svg>
  </footer>
</main>

</body>
</html>
